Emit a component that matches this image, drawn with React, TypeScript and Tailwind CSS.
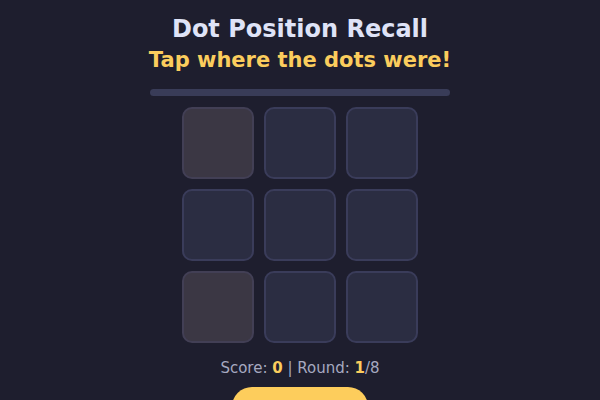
import React from "react";

const lit = new Set([0, 6]);

export default function App() {
  return (
    <div
      className="w-[600px] h-[400px] overflow-hidden bg-[#1e1e2e] flex flex-col items-center"
      style={{ fontFamily: '"DejaVu Sans", sans-serif' }}
    >
      <h1 className="shrink-0 mt-[14px] text-[24px] leading-[30px] font-bold text-[#dfe3f7]">
        Dot Position Recall
      </h1>
      <p className="shrink-0 mt-[2px] text-[21px] leading-[28px] font-bold text-[#fbcd5d]">
        Tap where the dots were!
      </p>
      <div className="shrink-0 mt-[15px] w-[300px] h-[7px] rounded-full bg-[#393c58]" />
      <div className="shrink-0 mt-[11px] grid grid-cols-3 gap-[10px]">
        {Array.from({ length: 9 }, (_, i) => (
          <div
            key={i}
            className={
              "w-[72px] h-[72px] rounded-[10px] border-2 " +
              (lit.has(i)
                ? "bg-[#3b3744] border-[#423f55]"
                : "bg-[#2b2d42] border-[#3a3c5a]")
            }
          />
        ))}
      </div>
      <div className="shrink-0 mt-[14px] text-[15px] leading-[22px] text-[#a6a9c0]">
        Score: <b className="text-[#fbcd5d]">0</b> | Round: <b className="text-[#fbcd5d]">1</b>/8
      </div>
      <button className="shrink-0 mt-[8px] w-[136px] h-[40px] rounded-full bg-[#fdcd5c]" />
    </div>
  );
}
